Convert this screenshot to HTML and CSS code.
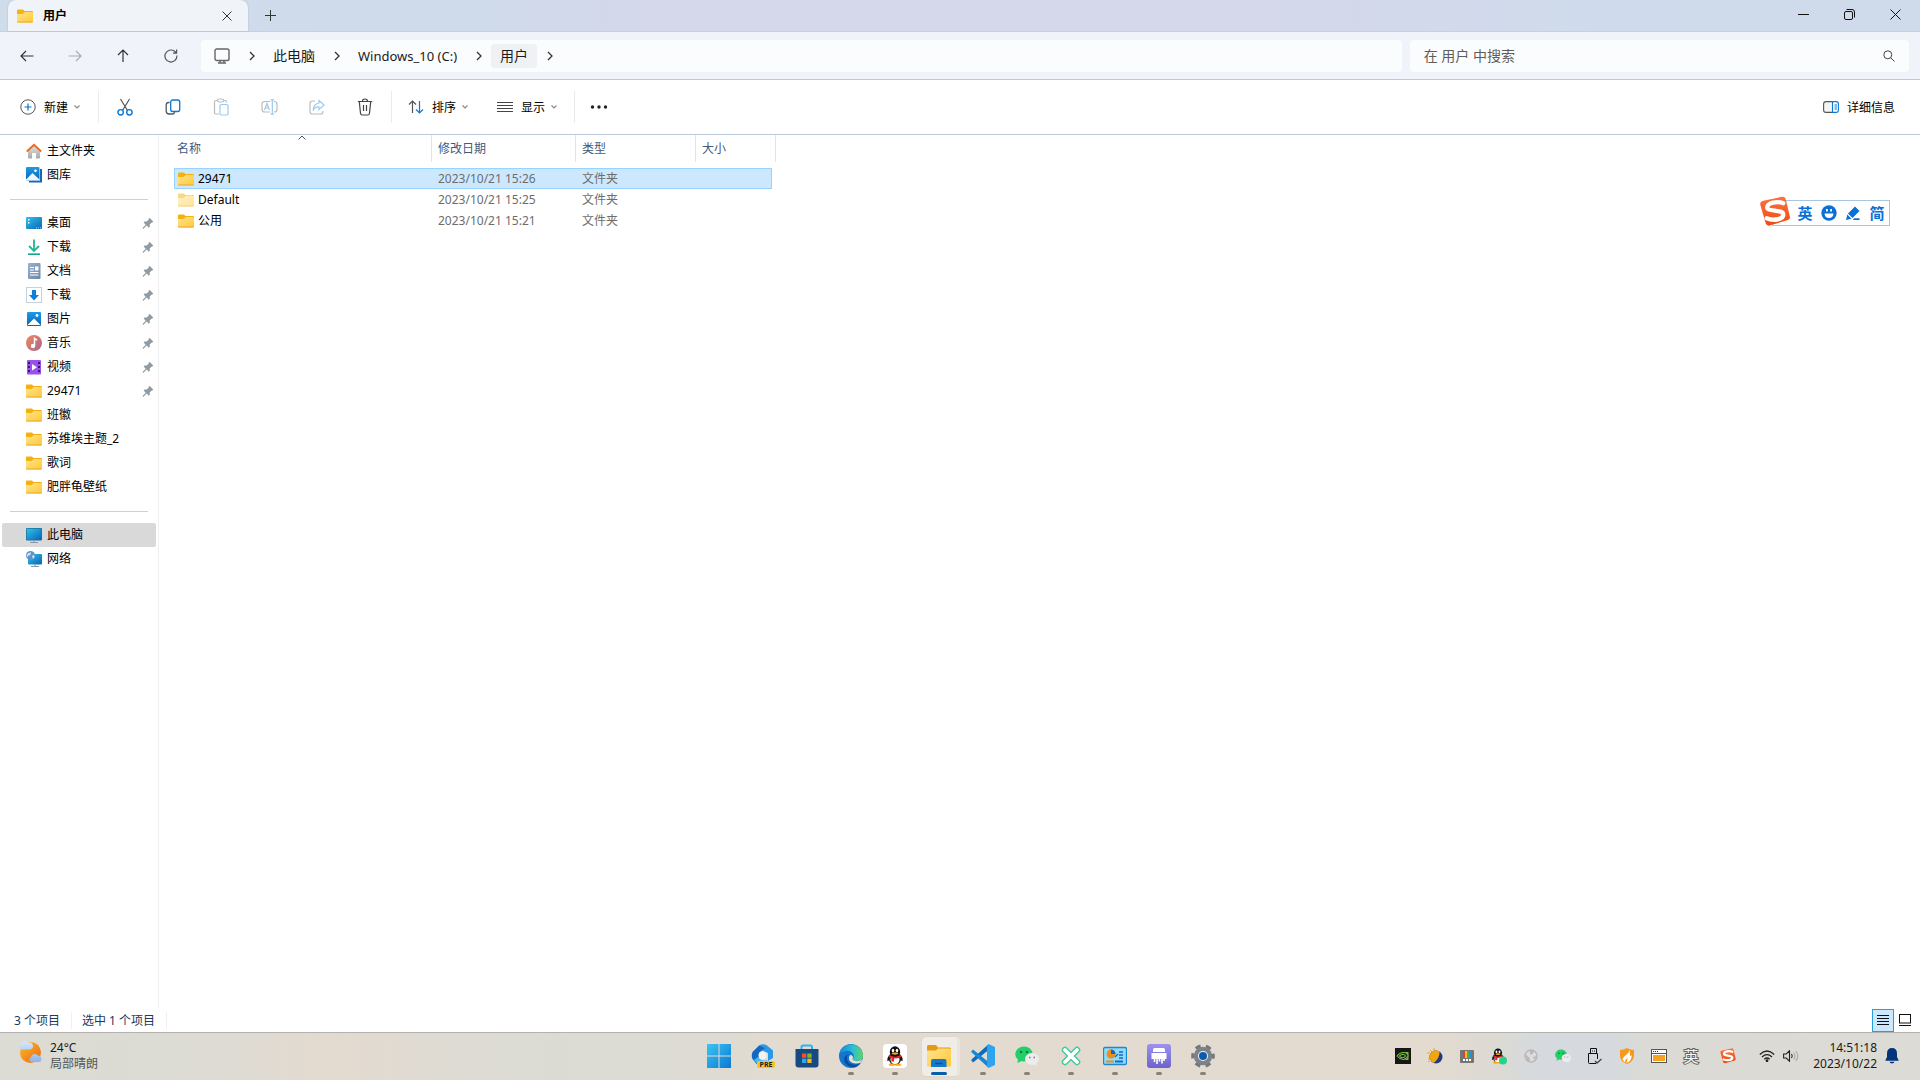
FILE: index.html
```html
<!DOCTYPE html>
<html lang="zh-CN">
<head>
<meta charset="utf-8">
<title>用户</title>
<meta name="viewport" content="width=device-width, initial-scale=1">
<link rel="stylesheet" href="styles.css">
</head>
<body>
<svg class="defs" aria-hidden="true">
  <defs>
    <linearGradient id="gFolder" x1="0" y1="0" x2="1" y2="1"><stop offset="0" stop-color="#ffe394"/><stop offset="1" stop-color="#ffc932"/></linearGradient>
    <linearGradient id="gSky" x1="0" y1="0" x2="1" y2="1"><stop offset="0" stop-color="#2fc3e8"/><stop offset="1" stop-color="#0a64b8"/></linearGradient>
    <linearGradient id="gBlue" x1="0" y1="0" x2="0" y2="1"><stop offset="0" stop-color="#1b9be8"/><stop offset="1" stop-color="#0b63b5"/></linearGradient>
    <linearGradient id="gDoc" x1="0" y1="0" x2="1" y2="1"><stop offset="0" stop-color="#9ab3cf"/><stop offset="1" stop-color="#6c86ac"/></linearGradient>
    <linearGradient id="gMusic" x1="0" y1="0" x2="1" y2="1"><stop offset="0" stop-color="#f08a5c"/><stop offset="1" stop-color="#a8648c"/></linearGradient>
    <linearGradient id="gHouse" x1="0" y1="0" x2="0" y2="1"><stop offset="0" stop-color="#e4e4e4"/><stop offset="1" stop-color="#a8a8a8"/></linearGradient>
    <linearGradient id="gSogou" x1="0" y1="0" x2="0" y2="1"><stop offset="0" stop-color="#fb7340"/><stop offset="1" stop-color="#f04a10"/></linearGradient>
    <linearGradient id="gSun" x1="0" y1="0" x2="1" y2="1"><stop offset="0" stop-color="#fbb82c"/><stop offset="1" stop-color="#ee6a10"/></linearGradient>
    <linearGradient id="gCloud" x1="0" y1="0" x2="0" y2="1"><stop offset="0" stop-color="#d8e8fb"/><stop offset="1" stop-color="#8fb4e6"/></linearGradient>
    <linearGradient id="gWin" x1="0" y1="0" x2="1" y2="1"><stop offset="0" stop-color="#3cc4f2"/><stop offset="1" stop-color="#0a78d2"/></linearGradient>
    <linearGradient id="gPurple" x1="0" y1="0" x2="0" y2="1"><stop offset="0" stop-color="#9c92ee"/><stop offset="1" stop-color="#6c62cc"/></linearGradient>
    <linearGradient id="gEdge" x1="0" y1="0" x2="1" y2="0"><stop offset="0" stop-color="#1688d8"/><stop offset=".6" stop-color="#2cc0d0"/><stop offset="1" stop-color="#62d858"/></linearGradient>
    <symbol id="folder" viewBox="0 0 16 14"><path d="M0 1.5Q0 .5 1 .5h5L7.500 2H15q1 0 1 1v5H0z" fill="#f5b20c"/><path d="M0 5h5.500L8 3h7q1 0 1 1v8.500q0 1-1 1H1q-1 0-1-1z" fill="url(#gFolder)"/><path d="M.3 13h15.400" stroke="#e9a92a"/></symbol>
    <symbol id="pin" viewBox="0 0 12 12"><path d="M7.400.800l3.900 3.700-1 1-.6-.1-2 2.200.1 2.100-1 1-2.100-2.200L1.400 11.700.6 11.500 .7 10.700 3.800 7.700 1.600 5.500l1-1 2.200.1 2-2-.1-.9z" fill="#8f9aa3"/></symbol>
    <symbol id="chev" viewBox="0 0 8 10"><path d="M2 1l4 4-4 4" fill="none" stroke="#333" stroke-width="1.300"/></symbol>
    <symbol id="down" viewBox="0 0 8 6"><path d="M1.500 1.500L4 4l2.500-2.500" fill="none" stroke="#8a8a8a" stroke-width="1.200"/></symbol>
    <symbol id="sogou" viewBox="0 0 32 32"><path d="M4 5L23 .800q3-.6 4 2l4.300 18q.7 3-2 4L10.500 30.500q-3 .6-4-2L.8 9Q.2 6 4 5z" fill="url(#gSogou)"/><path d="M24.500 7.500C18 5 8.500 7 8 11.500c-.5 5 16 2 16.500 7.500.5 5-10 7-17 4" fill="none" stroke="#fff" stroke-width="4.500" stroke-linecap="round"/></symbol>
    <symbol id="wechat" viewBox="0 0 24 20"><ellipse cx="9" cy="8" rx="8.800" ry="7.600" fill="#22cf68"/><path d="M3 13l-.5 4 4-2z" fill="#22cf68"/><circle cx="6" cy="6" r="1.200" fill="#0b7a3c"/><circle cx="12" cy="6" r="1.200" fill="#0b7a3c"/><ellipse cx="17" cy="13" rx="7" ry="6" fill="#ececee"/><path d="M20 17l2 2.800-4-1z" fill="#ececee"/><circle cx="14.800" cy="11.500" r=".9" fill="#888"/><circle cx="19.200" cy="11.500" r=".9" fill="#888"/></symbol>
    <symbol id="penguin" viewBox="0 0 20 22"><path d="M4 9Q1 13 1.500 16.500q1.500.5 2.500-1.500M16 9q3 4 2.500 7.500-1.500.5-2.500-1.500" fill="#111"/><ellipse cx="10" cy="14" rx="6.800" ry="7" fill="#111"/><ellipse cx="10" cy="15" rx="5" ry="5.500" fill="#fff"/><ellipse cx="10" cy="6.500" rx="5.800" ry="6.300" fill="#111"/><ellipse cx="7.800" cy="5" rx="1.400" ry="2" fill="#fff"/><ellipse cx="12.200" cy="5" rx="1.400" ry="2" fill="#fff"/><ellipse cx="10" cy="8.300" rx="3.600" ry="1.200" fill="#ffa800"/><path d="M3.500 9.500Q10 14 16.500 9.500l.6 2.200Q13 14 9 13.800V17H6v-3.700l-3-1.600z" fill="#e8202a"/><ellipse cx="6.500" cy="20.600" rx="3.500" ry="1.300" fill="#ffa800"/><ellipse cx="13.500" cy="20.600" rx="3.500" ry="1.300" fill="#ffa800"/></symbol>
    <symbol id="dl" viewBox="0 0 16 16"><path d="M8 .5v11M3 7l5 5 5-5" fill="none" stroke="#1fb794" stroke-width="1.800"/><path d="M2 15.200h12" stroke="#14a58c" stroke-width="1.600"/></symbol>
  </defs>
</svg>

<header class="titlebar">
  <div class="tab">
    <svg width="16" height="14"><use href="#folder"/></svg>
    <span class="tab-name">用户</span>
    <button class="plain tab-close" aria-label="关闭标签页"><svg width="10" height="10" viewBox="0 0 10 10"><path d="M.5.5l9 9M9.500.5l-9 9" stroke="#333"/></svg></button>
  </div>
  <button class="plain tab-new" aria-label="新标签页"><svg width="11" height="11" viewBox="0 0 11 11"><path d="M5.500 0v11M0 5.500h11" stroke="#333"/></svg></button>
  <div class="window-buttons">
    <button class="plain" aria-label="最小化"><svg width="11" height="11" viewBox="0 0 11 11"><path d="M0 5.500h11" stroke="#111"/></svg></button>
    <button class="plain" aria-label="还原"><svg width="11" height="11" viewBox="0 0 11 11" fill="none" stroke="#111"><rect x=".5" y="2.500" width="8" height="8" rx="1.500"/><path d="M2.500.5H8q2.500 0 2.500 2.500v5.500"/></svg></button>
    <button class="plain" aria-label="关闭"><svg width="11" height="11" viewBox="0 0 11 11"><path d="M.5.5l10 10M10.500.5l-10 10" stroke="#111"/></svg></button>
  </div>
</header>

<nav class="navbar">
  <div class="nav-buttons">
    <button class="plain" aria-label="后退"><svg width="14" height="12" viewBox="0 0 14 12" fill="none" stroke="#333" stroke-width="1.200"><path d="M13.500 6H1M6 1L1 6l5 5"/></svg></button>
    <button class="plain" aria-label="前进"><svg width="14" height="12" viewBox="0 0 14 12" fill="none" stroke="#a8abb0" stroke-width="1.200"><path d="M.5 6H13M8 1l5 5-5 5"/></svg></button>
    <button class="plain" aria-label="向上"><svg width="12" height="13" viewBox="0 0 12 13" fill="none" stroke="#333" stroke-width="1.200"><path d="M6 13V1M1 6l5-5 5 5"/></svg></button>
    <button class="plain" aria-label="刷新"><svg width="14" height="14" viewBox="0 0 14 14" fill="none" stroke="#555" stroke-width="1.200"><path d="M12.900 6.500A6 6 0 1 1 10.500 2.200L12.500 4M12.600.5V4.200H9"/></svg></button>
  </div>
  <div class="address">
    <button class="crumb" aria-label="位置"><svg width="16" height="16" viewBox="0 0 16 16" fill="none" stroke="#666" stroke-width="1.400"><rect x="1" y="1" width="14" height="11.500" rx="1.800"/><path d="M6 12.500v2M10 12.500v2M4 15h8"/></svg></button>
    <svg class="chev" width="8" height="10"><use href="#chev"/></svg>
    <button class="crumb">此电脑</button>
    <svg class="chev" width="8" height="10"><use href="#chev"/></svg>
    <button class="crumb latin">Windows_10 (C:)</button>
    <svg class="chev" width="8" height="10"><use href="#chev"/></svg>
    <button class="crumb current">用户</button>
    <svg class="chev" width="8" height="10"><use href="#chev"/></svg>
  </div>
  <label class="search">
    <input type="text" placeholder="在 用户 中搜索" aria-label="在 用户 中搜索">
    <svg width="12" height="12" viewBox="0 0 12 12" fill="none" stroke="#444"><circle cx="4.800" cy="4.800" r="4"/><path d="M7.700 7.700l3.800 3.800"/></svg>
  </label>
</nav>

<div class="toolbar">
  <div class="tool-group new">
    <button class="tool"><svg width="16" height="16" viewBox="0 0 16 16" fill="none"><circle cx="8" cy="8" r="7.200" stroke="#555"/><path d="M8 4.500v7M4.500 8h7" stroke="#0a6fd0" stroke-width="1.200"/></svg><span>新建</span><svg width="8" height="6"><use href="#down"/></svg></button>
  </div>
  <div class="tool-group icons">
    <button class="tool" aria-label="剪切"><svg width="16" height="18" viewBox="0 0 16 18" fill="none"><path d="M3.500 1l7 11.500M12.500 1l-7 11.500" stroke="#555" stroke-width="1.200"/><circle cx="3.600" cy="14.300" r="2.700" stroke="#0a78d4" stroke-width="1.400"/><circle cx="12.400" cy="14.300" r="2.700" stroke="#0a78d4" stroke-width="1.400"/></svg></button>
    <button class="tool" aria-label="复制"><svg width="16" height="16" viewBox="0 0 16 16" fill="none" stroke-width="1.300"><path d="M4.500 3.500H3.500Q1.200 3.500 1.200 6v6q0 3 3 3h3q2 0 2.500-1.700" stroke="#555"/><rect x="5.700" y="1" width="9" height="11.500" rx="2" stroke="#0a78d4"/></svg></button>
    <button class="tool" aria-label="粘贴"><svg width="16" height="18" viewBox="0 0 16 18" fill="none" stroke-width="1.200"><path d="M4.500 2.500H3q-1.500 0-1.500 1.500v10.500q0 1.500 1.500 1.500h3M10.500 2.500H12q1.500 0 1.500 1.500v.5" stroke="#bbb"/><rect x="4.500" y="1" width="6" height="3" rx="1.500" stroke="#bbb"/><rect x="7" y="6.500" width="8" height="10.500" rx="1.500" stroke="#9cc8ee"/></svg></button>
    <button class="tool" aria-label="重命名"><svg width="17" height="16" viewBox="0 0 17 16" fill="none" stroke-width="1.200"><path d="M9 2.500H3.500q-2.500 0-2.500 2.500v5.500Q1 13 3.500 13H9M13 2.500q3 0 3 2.500v5.500q0 2.500-3 2.500" stroke="#bbb"/><path d="M3.500 11L6 4.500 8.500 11M4.300 9h3.400M11.300 1v14M9.500.8h3.600M9.500 15.200h3.600" stroke="#9cc8ee"/></svg></button>
    <button class="tool" aria-label="共享"><svg width="16" height="16" viewBox="0 0 16 16" fill="none" stroke-width="1.200"><path d="M6 2H3.500Q1 2 1 4.500v8Q1 15 3.500 15h8q2.500 0 2.500-2.500V12" stroke="#bbb"/><path d="M10 1.500L15 6l-5 4.500V8Q6 7.500 4 11.500 4.500 5 10 4z" stroke="#9cc8ee"/></svg></button>
    <button class="tool" aria-label="删除"><svg width="16" height="18" viewBox="0 0 16 18" fill="none" stroke="#444" stroke-width="1.200"><path d="M.8 3.500h14.400M5.500 3.200Q5.500 1 8 1t2.500 2.200M2.300 3.800l1.200 11.500q.2 1.700 1.700 1.700h5.600q1.500 0 1.700-1.700l1.200-11.500M6.500 7v6M9.500 7v6"/></svg></button>
  </div>
  <div class="tool-group views">
    <button class="tool"><svg width="16" height="14" viewBox="0 0 16 14" fill="none" stroke-width="1.200"><path d="M4.500 13V1M1 4.500L4.500 1 8 4.500" stroke="#555"/><path d="M11.500 1v12M8 9.500l3.500 3.500L15 9.500" stroke="#0a78d4"/></svg><span>排序</span><svg width="8" height="6"><use href="#down"/></svg></button>
    <button class="tool"><svg width="16" height="12" viewBox="0 0 16 12" stroke="#444"><path d="M0 1.500h16M0 4.500h16M0 7.500h16M0 10.500h16"/></svg><span>显示</span><svg width="8" height="6"><use href="#down"/></svg></button>
  </div>
  <div class="tool-group more">
    <button class="tool" aria-label="查看更多"><svg width="18" height="4" viewBox="0 0 18 4" fill="#222"><circle cx="2.500" cy="2" r="1.700"/><circle cx="9" cy="2" r="1.700"/><circle cx="15.500" cy="2" r="1.700"/></svg></button>
  </div>
  <button class="tool details"><svg width="16" height="12" viewBox="0 0 16 12" fill="none"><path d="M9.500.6H3Q.6.600.6 3v6Q.6 11.400 3 11.400h6.500" stroke="#555" stroke-width="1.100" fill="#f4f4f4"/><path d="M9.500.6H13q2.400 0 2.400 2.400v6q0 2.400-2.400 2.400H9.500zM11.500 4H14M11.500 6H14M11.500 8H14" stroke="#0a78d4" stroke-width="1.100"/></svg><span>详细信息</span></button>
</div>

<div class="main">
  <aside class="sidebar">
    <ul>
      <li><a href="#"><svg width="16" height="16" viewBox="0 0 16 16"><path d="M2 7l6-5.500L14 7v7.500q0 1-1 1H10V10H6v5.500H3q-1 0-1-1z" fill="url(#gHouse)"/><path d="M.8 8.500L8 1.700l7.200 6.800" fill="none" stroke="#ec6a1e" stroke-width="1.900"/></svg><span>主文件夹</span></a></li>
      <li><a href="#"><svg width="16" height="16" viewBox="0 0 16 16"><path d="M3 14.500h12V2" fill="none" stroke="#1668b8" stroke-width="2"/><rect width="13.500" height="13.500" rx="1" fill="url(#gBlue)"/><path d="M0 12.500L6.500 6l7 6.500v1H0z" fill="#eef6ff"/><circle cx="9.500" cy="3.700" r="1.300" fill="#fff"/></svg><span>图库</span></a></li>
    </ul>
    <hr>
    <ul>
      <li><a href="#"><svg width="16" height="16" viewBox="0 0 16 16"><rect y="2" width="16" height="12" rx="1" fill="url(#gSky)"/><path d="M2 4h1.500v1.500H2zM2 7h1.500v1.500H2z" fill="#fff"/><path d="M10 12.800h5" stroke="#8cd4f4" stroke-dasharray="1 1"/></svg><span>桌面</span></a><svg width="12" height="12"><use href="#pin"/></svg></li>
      <li><a href="#"><svg width="16" height="16"><use href="#dl"/></svg><span>下载</span></a><svg width="12" height="12"><use href="#pin"/></svg></li>
      <li><a href="#"><svg width="16" height="16" viewBox="0 0 16 16"><rect x="2" width="12.500" height="16" rx="1" fill="url(#gDoc)"/><path d="M4 4.500h4M4 7h4M4 9.500h8.500M4 12h8.500" stroke="#fff"/><rect x="9" y="3.500" width="3.500" height="4" fill="#fff"/></svg><span>文档</span></a><svg width="12" height="12"><use href="#pin"/></svg></li>
      <li><a href="#"><svg width="16" height="16" viewBox="0 0 16 16"><rect x=".5" y=".5" width="15" height="15" fill="#fff" stroke="#c8d0d8"/><path d="M6 3h4v5h3l-5 5.500L3 8h3z" fill="#0f80d8"/></svg><span>下载</span></a><svg width="12" height="12"><use href="#pin"/></svg></li>
      <li><a href="#"><svg width="16" height="16" viewBox="0 0 16 16"><rect x="1" y="1" width="14" height="14" rx="1" fill="url(#gBlue)"/><path d="M1.500 14L8 7.500l6.500 6.500z" fill="#fff"/><circle cx="11" cy="4.500" r="1.400" fill="#fff"/></svg><span>图片</span></a><svg width="12" height="12"><use href="#pin"/></svg></li>
      <li><a href="#"><svg width="16" height="16" viewBox="0 0 16 16"><circle cx="8" cy="8" r="8" fill="url(#gMusic)"/><path d="M8.500 11V3.500l2.500 1.700" fill="none" stroke="#fff" stroke-width="1.500"/><circle cx="7" cy="11" r="2.200" fill="#fff"/></svg><span>音乐</span></a><svg width="12" height="12"><use href="#pin"/></svg></li>
      <li><a href="#"><svg width="16" height="16" viewBox="0 0 16 16"><rect x="1" y="1" width="14" height="14.500" rx="1" fill="#9a50ea"/><path d="M3 3v11M13 3v11" stroke="#3c1478" stroke-width="2" stroke-dasharray="2 2"/><path d="M6 5l5 3.300L6 11.500z" fill="#fff"/></svg><span>视频</span></a><svg width="12" height="12"><use href="#pin"/></svg></li>
      <li><a href="#"><svg width="16" height="14"><use href="#folder"/></svg><span>29471</span></a><svg width="12" height="12"><use href="#pin"/></svg></li>
      <li><a href="#"><svg width="16" height="14"><use href="#folder"/></svg><span>班徽</span></a></li>
      <li><a href="#"><svg width="16" height="14"><use href="#folder"/></svg><span>苏维埃主题_2</span></a></li>
      <li><a href="#"><svg width="16" height="14"><use href="#folder"/></svg><span>歌词</span></a></li>
      <li><a href="#"><svg width="16" height="14"><use href="#folder"/></svg><span>肥胖龟壁纸</span></a></li>
    </ul>
    <hr>
    <ul>
      <li class="active"><a href="#"><svg width="16" height="16" viewBox="0 0 16 16"><rect y="1" width="16" height="12.500" rx="1" fill="#1a6f9c"/><rect x=".7" y="1.700" width="14.600" height="11" fill="url(#gSky)"/><path d="M8 13v2.500M4 15.500h8" stroke="#8a9aa8" stroke-width="1.200"/></svg><span>此电脑</span></a></li>
      <li><a href="#"><svg width="16" height="16" viewBox="0 0 16 16"><rect x="2" y="3" width="14" height="10.500" rx="1" fill="url(#gSky)"/><path d="M9 13v2.500M5 15.500h8" stroke="#8a9aa8" stroke-width="1.200"/><circle cx="4.500" cy="4.500" r="4.500" fill="#5a94cc"/><path d="M1 3.500Q3 1 5 1.500 5 4 3 4.500T2 7Q0 5 1 3.500zM6 5l2-1 .5 2L7 8z" fill="#d4e4f2"/></svg><span>网络</span></a></li>
    </ul>
  </aside>

  <main class="files">
    <table>
      <colgroup><col class="c-name"><col class="c-date"><col class="c-type"><col class="c-size"></colgroup>
      <thead>
        <tr>
          <th>名称<svg class="sorted" width="8" height="5" viewBox="0 0 8 5"><path d="M.5 4.500L4 1l3.500 3.500" fill="none" stroke="#555"/></svg></th>
          <th>修改日期</th><th>类型</th><th>大小</th>
        </tr>
      </thead>
      <tbody>
        <tr class="selected"><td><div class="cell name"><svg width="16" height="14"><use href="#folder"/></svg>29471</div></td><td><div class="cell">2023/10/21 15:26</div></td><td><div class="cell">文件夹</div></td><td><div class="cell"></div></td></tr>
        <tr class="hidden-item"><td><div class="cell name"><svg width="16" height="14"><use href="#folder"/></svg>Default</div></td><td><div class="cell">2023/10/21 15:25</div></td><td><div class="cell">文件夹</div></td><td><div class="cell"></div></td></tr>
        <tr><td><div class="cell name"><svg width="16" height="14"><use href="#folder"/></svg>公用</div></td><td><div class="cell">2023/10/21 15:21</div></td><td><div class="cell">文件夹</div></td><td><div class="cell"></div></td></tr>
      </tbody>
    </table>
  </main>
</div>

<footer class="status">
  <span>3 个项目</span>
  <span>选中 1 个项目</span>
  <div class="view-switch">
    <button class="plain on" aria-label="详细信息视图"><svg width="12" height="11" viewBox="0 0 12 11" stroke="#111"><path d="M0 .5h12M0 3.500h12M0 6.500h12M0 9.500h12" /></svg></button>
    <button class="plain" aria-label="大缩略图视图"><svg width="12" height="12" viewBox="0 0 12 12" fill="none" stroke="#111"><rect x=".5" y=".5" width="11" height="8.500"/><path d="M0 11.500h12"/></svg></button>
  </div>
</footer>

<div class="taskbar">
  <button class="plain weather">
    <svg width="24" height="24" viewBox="0 0 24 24"><circle cx="12.500" cy="12.500" r="10.500" fill="url(#gSun)"/><path d="M3 9.500a3 3 0 0 1 0-5.500 4 4 0 0 1 7-1.500A3.500 3.500 0 0 1 12.500 9.500zM13 22a2.800 2.800 0 0 1 0-5 4 4 0 0 1 7-1.500A3.400 3.400 0 0 1 21.500 22z" fill="url(#gCloud)"/></svg>
    <span class="two-line"><span>24°C</span><span class="muted">局部晴朗</span></span>
  </button>

  <div class="apps">
    <button class="app" aria-label="开始"><svg width="24" height="24" viewBox="0 0 24 24" fill="url(#gWin)"><path d="M0 0h11.500v11.500H0zM12.500 0H24v11.500H12.500zM0 12.500h11.500V24H0zM12.500 12.500H24V24H12.500z"/></svg></button>
    <button class="app" aria-label="电脑管家"><svg width="24" height="24" viewBox="0 0 24 24"><path d="M8 1.500Q12-1 16 1.500l6 5V14l-5 3V9l-7-3z" fill="#2a9ae8"/><path d="M8 1.500L1.500 8Q0 12 1.500 15l5 6L8 15V9l6-5z" fill="#1568c0"/><path d="M3 16l4-3q4 5 9 3l2 4q-8 5-15-4z" fill="#48b8f4"/><circle cx="11.500" cy="11.500" r="4" fill="#f2f2f0"/><rect x="6" y="17" width="18" height="7" rx="2" fill="#fbc418"/><text x="15" y="23" text-anchor="middle" class="badge">PRE</text></svg></button>
    <button class="app" aria-label="商店"><svg width="24" height="24" viewBox="0 0 24 24"><path d="M6.500 6V3Q6.500 1.500 8 1.500h7.500Q17 1.500 17 3v3" fill="none" stroke="#30b4f0" stroke-width="2"/><path d="M.5 5h23v15.500q0 3-3 3h-17q-3 0-3-3z" fill="#174a82"/><path d="M7 9.500h4.300v4.300H7z" fill="#f2512a"/><path d="M12.300 9.500h4.300v4.300h-4.300z" fill="#7fba1c"/><path d="M7 14.700h4.300V19H7z" fill="#2ca8ee"/><path d="M12.300 14.700h4.300V19h-4.300z" fill="#fdb913"/></svg></button>
    <button class="app running" aria-label="Edge"><svg width="24" height="24" viewBox="0 0 24 24"><circle cx="12" cy="12" r="12" fill="#1276cc"/><path d="M.3 10A12 12 0 0 1 24 11q0 6-6 6-4 0-4.500-2 2-2 1-4.500Q12 6 7 7 2 8 .3 10z" fill="url(#gEdge)"/><path d="M9.500 10Q6 14 9.500 18.500 13 22 21 19.800q-1.500 2-4 3.300Q10 24 6 19 3 13 9.500 10z" fill="#0b4c9e"/><path d="M13.500 15q.5 2 4.500 2.200 3 0 5.500-2l-1.500 3.300Q14 21 10.500 16.500 9 13 11.500 10.800q3.500 1 2 4.200z" fill="#e8e0d8"/></svg></button>
    <button class="app running" aria-label="QQ"><svg width="24" height="24" viewBox="0 0 24 24"><rect width="24" height="24" rx="4" fill="#fff"/><use href="#penguin" x="3" y="1.500" width="18" height="21"/></svg></button>
    <button class="app running focused" aria-label="文件资源管理器"><svg width="24" height="22" viewBox="0 0 24 22"><path d="M0 1.500Q0 0 1.500 0H9l2 2.500h11.500Q24 2.500 24 4v8H0z" fill="#e59a12"/><path d="M0 5.500h9l2-2h11.500Q24 3.500 24 5v15.500q0 1-1 1H1q-1 0-1-1z" fill="url(#gFolder)"/><path d="M4 22v-6q0-2 2-2h11.500q2 0 2 2v6z" fill="#1878cc"/><path d="M8 18.500h7.500" stroke="#0c5298" stroke-width="1.500"/></svg></button>
    <button class="app running" aria-label="VS Code"><svg width="24" height="24" viewBox="0 0 24 24"><path d="M17.500 6L2 18.500.5 16.500v-1L17.500.2z" fill="#0f6cb8"/><path d="M17.500 18L2 5.500.5 7.300v1L17.500 23.800z" fill="#1488d8"/><path d="M17.500 0L24 3v18l-6.500 3-1.500-1.500V1.500z" fill="#2ca4ee"/></svg></button>
    <button class="app running" aria-label="微信"><svg width="24" height="20"><use href="#wechat"/></svg></button>
    <button class="app running" aria-label="X"><svg width="20" height="20" viewBox="0 0 20 20" fill="none" stroke-linecap="round"><path d="M4 4l12 12M16 4L4 16" stroke="#3ccb9c" stroke-width="6.500"/><path d="M4 4l12 12M16 4L4 16" stroke="#fff" stroke-width="3.800"/></svg></button>
    <button class="app running" aria-label="控制面板"><svg width="24" height="20" viewBox="0 0 24 20"><rect x=".5" y="1.500" width="23" height="17" rx="1.500" fill="#8edcfa" stroke="#1c88d0" stroke-width="1.300"/><circle cx="8" cy="8" r="4.500" fill="#f08c18"/><path d="M8 8V3.500A4.500 4.500 0 0 1 12.500 8z" fill="#1668c0"/><path d="M12 11l3-3M16 6h4M16 9h4M16 12h4" stroke="#1668c0" stroke-width="1.300"/><path d="M3 15.500h8" stroke="#f08c18" stroke-width="2"/><path d="M12 15.500h8" stroke="#1668c0" stroke-width="2"/></svg></button>
    <button class="app running" aria-label="粉碎"><svg width="24" height="24" viewBox="0 0 24 24"><rect width="24" height="24" rx="3" fill="url(#gPurple)"/><path d="M7.500 4h9q1.500 0 1.500 2v2H6V6q0-2 1.500-2zM4.500 9h15v6h-15z" fill="#fff"/><path d="M7.500 14v4M10 14v6M12.500 14v3.500M15 14v5.500M17 14v3" stroke="#fff" stroke-width="1.600"/></svg></button>
    <button class="app running" aria-label="设置"><svg width="24" height="24" viewBox="0 0 24 24"><circle cx="12" cy="12" r="9.800" fill="none" stroke="#72787e" stroke-width="4" stroke-dasharray="5.130 5.130" stroke-dashoffset="2.600"/><circle cx="12" cy="12" r="7" fill="none" stroke="#7c8288" stroke-width="4.500"/><circle cx="12" cy="12" r="5" fill="#e8eef4"/><circle cx="12" cy="12" r="4" fill="#0b5cab"/></svg></button>
  </div>

  <div class="tray">
    <button class="plain" aria-label="NVIDIA"><svg width="16" height="16" viewBox="0 0 16 16"><rect width="16" height="16" fill="#161616"/><path d="M2 8q3-4 7-3.500T13 8q-2 3.500-5 3.500T2 8zM4.500 8Q6.500 6 8.500 6.500T10.500 8 8 9.500 4.500 8z" fill="none" stroke="#76b83a" stroke-width="1.100"/><path d="M8 4h5.500v8H9q4-1.500 4-4T8 4z" fill="#76b83a"/></svg></button>
    <button class="plain" aria-label="日夜"><svg width="16" height="16" viewBox="0 0 16 16"><path d="M0 5h3M1 11h3M3 2l2 2M7 0v3M1 14l2-1" stroke="#eea820"/><circle cx="9" cy="9" r="6.500" fill="#26387c"/><path d="M12.500 3.500Q13 10 6.500 15A6.500 6.500 0 0 1 4 5Q8 1 12.500 3.500z" fill="#f0a60c"/></svg></button>
    <button class="plain" aria-label="内存"><svg width="14" height="14" viewBox="0 0 14 14"><rect x=".7" y="1.700" width="12.600" height="11.600" fill="#777" stroke="#666"/><path d="M3 2h2v7H3z" fill="#e83c2c"/><path d="M5 2h2v7H5z" fill="#f4c020"/><path d="M7 2h2v7H7z" fill="#40b850"/><path d="M9 2h2v7H9z" fill="#2c8ce8"/><path d="M3 11h8" stroke="#fff" stroke-width="2" stroke-dasharray="2 1"/></svg></button>
    <button class="plain" aria-label="QQ"><svg width="16" height="17" viewBox="0 0 16 17"><use href="#penguin" width="14" height="16"/><circle cx="12" cy="12.500" r="4" fill="#24d488"/></svg></button>
    <button class="plain" aria-label="地球"><svg width="14" height="14" viewBox="0 0 14 14"><circle cx="7" cy="7" r="6" fill="#dcdcdc" stroke="#b8b8b8" stroke-width="1.400"/><path d="M1.500 5l4 4 .5 3.500-3-1.500zM6 1.500h4.500L8.500 5 6 5.500zM9 8l3.500-1-2 4z" fill="#b8b8b8"/></svg></button>
    <button class="plain" aria-label="微信"><svg width="16" height="14"><use href="#wechat"/></svg></button>
    <button class="plain" aria-label="安全删除硬件"><svg width="14" height="16" viewBox="0 0 14 16" fill="none" stroke="#111"><path d="M2.500 5V.5h6V5"/><path d="M4 3h1M6 3h1"/><path d="M8 15.500H1.500q-1 0-1-1V5.500h9V11"/><path d="M7 13l2 2 4.500-4" stroke="#444" stroke-width="1.300"/></svg></button>
    <button class="plain" aria-label="火绒"><svg width="14" height="16" viewBox="0 0 14 16"><path d="M7 0q3 2 7 2v6q0 5-7 8-7-3-7-8V2q4 0 7-2z" fill="#f79a1c"/><path d="M9.500 2q-.5 3-3.500 5T2.500 11.500L5 14.500q0-3 2.500-5 0 3-1 5.500Q12.500 12 11.500 7L10 8.500z" fill="#fff"/></svg></button>
    <button class="plain" aria-label="窗口"><svg width="16" height="14" viewBox="0 0 16 14"><rect x=".5" y=".5" width="15" height="13" fill="#fff" stroke="#555"/><path d="M.5 4.500h15" stroke="#555"/><path d="M2 2.500h6" stroke="#333" stroke-dasharray="1 1"/><path d="M2 6h12v6H2z" fill="#f9a31c"/></svg></button>
    <button class="plain ime" aria-label="输入法">英</button>
    <button class="plain" aria-label="搜狗输入法"><svg width="16" height="16"><use href="#sogou"/></svg></button>
    <button class="plain net" aria-label="网络和音量"><svg width="16" height="12" viewBox="0 0 16 12" fill="none" stroke="#222" stroke-width="1.200"><path d="M.8 4.500Q8-2.500 15.200 4.500M3 7q5-4.600 10 0M5.300 9.200q2.700-2.400 5.400 0"/><circle cx="8" cy="10.700" r=".8" fill="#222"/></svg><svg width="16" height="12" viewBox="0 0 16 12" fill="none" stroke="#222" stroke-width="1.100"><path d="M.6 4h2.600L6.500.8v10.400L3.200 8H.6z"/><path d="M8.500 4q1.500 2 0 4"/><path d="M10.500 2.500q3 3.500 0 7M12.800 1q4 5 0 10" stroke="#aaa"/></svg></button>
    <button class="plain clock"><span>14:51:18</span><span>2023/10/22</span></button>
    <button class="plain bell" aria-label="通知"><svg width="14" height="16" viewBox="0 0 14 16" fill="#04357c"><path d="M7 0q5 0 5 5.500V9l1.500 3v.8H.5V12L2 9V5.500Q2 0 7 0zM4.500 13.800h5Q9 15.500 7 15.500t-2.500-1.700z"/></svg></button>
  </div>
</div>

<div class="ime-float">
  <svg class="ime-logo" width="32" height="31"><use href="#sogou"/></svg>
  <button class="plain">英</button>
  <button class="plain" aria-label="表情"><svg width="16" height="16" viewBox="0 0 16 16"><circle cx="8" cy="8" r="7.700" fill="#0a70d8"/><path d="M5 4h1.800v2.500H5zM9.200 4H11v2.500H9.200zM3.500 8.500h9Q12 13 8 13T3.500 8.500z" fill="#fff"/></svg></button>
  <button class="plain" aria-label="手写"><svg width="14" height="14" viewBox="0 0 14 14" fill="#0a70d8"><path d="M9 .500L13.500 5 6.500 12 2 7.500zM1.300 8.500l4.200 4.200L0 14zM8 12.300h5.500V14H7z"/></svg></button>
  <button class="plain">简</button>
</div>
</body>
</html>
```
FILE: styles.css
```css
* { box-sizing: border-box; }

body {
  margin: 0;
  min-height: 100vh;
  display: flex;
  flex-direction: column;
  background: #fff;
  color: #000;
  font: 12px/16px "Noto Sans", "Noto Sans CJK SC", sans-serif;
}

button, input { font: inherit; color: inherit; }
svg { display: block; flex: none; }
a { color: inherit; text-decoration: none; }
.defs { position: absolute; width: 0; height: 0; }

.plain, .tool, .crumb, .app {
  display: flex;
  align-items: center;
  justify-content: center;
  padding: 0;
  border: 0;
  background: none;
  white-space: nowrap;
}

/* Title bar */
.titlebar {
  display: flex;
  align-items: stretch;
  height: 32px;
  padding-left: 8px;
  border-bottom: 1px solid #c3d0e2;
  background: linear-gradient(90deg, #cfdcea 0, #cfdbea 24%, #d4d8ea 34%, #d4d8ea 66%, #cfdbec 84%, #cfdbeb 100%);
}
.tab {
  display: flex;
  align-items: center;
  width: 240px;
  padding: 0 16px 0 9px;
  gap: 10px;
  border-radius: 8px 8px 0 0;
  background: #f0f4f9;
  box-shadow: 0 0 2px #a9b8cc;
}
.tab-name { flex: 1; padding-top: 1px; font-weight: 600; }
.tab-new { width: 44px; }
.window-buttons { display: flex; margin-left: auto; padding: 0 2px 3px 0; }
.window-buttons .plain { width: 46px; }

/* Navigation */
.navbar {
  display: flex;
  align-items: center;
  height: 48px;
  padding-right: 11px;
  border-bottom: 1px solid #bcc9dc;
  background: #f0f3f9;
}
.nav-buttons { display: flex; padding-left: 3px; width: 201px; }
.nav-buttons .plain { width: 48px; height: 32px; }
.address, .search {
  display: flex;
  align-items: center;
  height: 32px;
  border-radius: 4px;
  background: #fbfcfe;
}
.address { flex: 1; padding-left: 4px; color: #1a1a1a; font-size: 14px; line-height: 20px; }
.crumb { height: 24px; padding: 0 9px; border-radius: 4px; }
.crumb.latin { font-size: 13px; }
.crumb.current { background: #f0f1f4; }
.address .chev { margin: 0 8px 0 9px; }
.search { flex: 0 0 26%; min-width: 0; margin-left: 8px; padding: 0 14px; }
.navbar { --edge: 11px; }
.navbar .search { flex-basis: calc(26% + 3px); }
.search input {
  flex: 1;
  min-width: 0;
  padding: 0;
  border: 0;
  outline: 0;
  background: none;
  font-size: 14px;
  line-height: 20px;
}
.search input::placeholder { color: #5c5c5c; opacity: 1; }

/* Command bar */
.toolbar {
  display: flex;
  align-items: center;
  height: 55px;
  border-bottom: 1px solid #bcc9dc;
  background: #fff;
}
.tool { height: 32px; gap: 8px; }
.tool span { padding-top: 1px; }
.tool-group { display: flex; align-items: center; height: 32px; }
.tool-group.new, .tool-group.icons, .tool-group.views { border-right: 1px solid #ebebeb; }
.tool-group.new { width: 99px; padding-left: 20px; }
.tool-group.icons { padding: 0 2px; }
.tool-group.icons .tool { width: 48px; }
.tool-group.new .tool, .tool-group.views .tool { gap: 5px; }
.tool-group.new .tool span, .tool-group.views .tool span { margin-left: 3px; }
.tool-group.views { padding: 0 16px; gap: 28px; }
.tool-group.more { padding-left: 15px; }
.details { margin-left: auto; margin-right: 25px; }

/* Body */
.main { flex: 1; display: flex; }
.sidebar { width: 159px; padding: 4px 2px; border-right: 1px solid #f0f0f0; }
.sidebar ul { margin: 0; padding: 0; list-style: none; }
.sidebar li {
  display: flex;
  align-items: center;
  justify-content: space-between;
  height: 24px;
  padding: 0 2px 0 24px;
  border-radius: 2px;
}
.sidebar li.active { background: #d9d9d9; }
.sidebar a { display: flex; align-items: center; gap: 5px; }
.sidebar hr { height: 1px; margin: 12px 8px 11px 8px; border: 0; background: #d0d0d0; }

.files { flex: 1; padding-left: 15px; }
table { table-layout: fixed; width: 602px; border-collapse: separate; border-spacing: 0; }
.c-name { width: 258px; }
.c-date { width: 144px; }
.c-type { width: 120px; }
.c-size { width: 80px; }
th {
  position: relative;
  height: 27px;
  padding: 0 0 0 6px;
  border-right: 1px solid #e4e4e4;
  color: #44597a;
  font-weight: 400;
  text-align: left;
}
th:first-child { padding-left: 3px; }
.sorted { position: absolute; top: 0; left: 50%; margin-left: -5px; }
tbody::before { content: ""; display: block; height: 6px; }
td { padding: 0; color: #6d6d6d; }
td:last-child { padding-right: 4px; }
.cell { display: flex; align-items: center; height: 21px; padding-left: 6px; }
.cell.name { gap: 4px; padding-left: 4px; color: #000; }
.selected .cell { border: solid #99d1ff; border-width: 1px 0; background: #cce8ff; }
.selected .cell.name { padding-left: 3px; border-left-width: 1px; }
.selected td:last-child .cell { border-right-width: 1px; }
.hidden-item svg { opacity: .5; }

/* Status bar */
.status {
  display: flex;
  align-items: center;
  height: 24px;
  padding: 0 4px 0 14px;
  color: #1e395b;
}
.status > span { padding: 1px 11px 0 0; margin-right: 10px; border-right: 1px solid #f0f0f0; }
.view-switch { display: flex; margin-left: auto; }
.view-switch .plain { width: 22px; height: 23px; }
.view-switch .on { border: 1px solid #26a0da; background: #cce8ff; }

/* Taskbar */
.taskbar {
  display: grid;
  grid-template-columns: 1fr auto 1fr;
  align-items: center;
  height: 48px;
  padding: 0 0 2px 2px;
  border-top: 1px solid #b2b1ad;
  background: linear-gradient(90deg, #dcdbd4 0, #dddbd3 12%, #e4dacf 17%, #dddbd3 24%, #dcdbd4 34%, #e3dbd0 42%, #e4dbd0 74%, #dcdad4 78%, #d6dade 80%, #d6dade 84%, #dcdad4 86%, #dddbd5 100%);
}
.weather { justify-self: start; align-items: flex-start; gap: 8px; padding-left: 16px; text-align: left; color: #1a1a1a; }
.two-line { display: flex; flex-direction: column; }
.muted { color: #555; }
.apps { display: flex; gap: 4px; }
.app { position: relative; z-index: 0; width: 40px; height: 46px; }
.badge { font: 700 7px/1 "Noto Sans", sans-serif; fill: #222; }
.running::after {
  content: "";
  position: absolute;
  bottom: 4px;
  left: 50%;
  width: 6px;
  height: 3px;
  margin-left: -3px;
  border-radius: 2px;
  background: #85827e;
}
.focused::before {
  content: "";
  position: absolute;
  z-index: -1;
  inset: 4px 2px 3px 3px;
  border-radius: 4px;
  background: #f0ece7;
  box-shadow: 3px 0 0 #e9e4de, 0 0 1px #b8b4ae;
}
.focused::after { width: 16px; margin-left: -8px; background: #0b5cab; }

.tray { display: flex; align-items: center; justify-self: end; padding-right: 20px; }
.tray > .plain { width: 32px; height: 40px; }
.tray > .ime { color: #f4f4f2; font-size: 15px; font-weight: 400; -webkit-text-stroke: 2px #666; paint-order: stroke fill; }
.tray > .ime + .plain { width: 42px; }
.tray > .net { width: 60px; gap: 8px; }
.tray > .clock { flex-direction: column; align-items: flex-end; width: 68px; color: #1a1a1a; }
.tray > .bell { width: 16px; margin-left: 7px; }

/* Floating input-method bar */
.ime-float {
  position: absolute;
  top: 200px;
  right: 30px;
  display: flex;
  align-items: center;
  width: 118px;
  height: 26px;
  padding-left: 20px;
  border: 1px solid #a9c6de;
  background: #fff;
  color: #0a70d8;
  font-size: 15px;
  font-weight: 700;
}
.ime-float .plain { width: 24px; height: 24px; }
.ime-logo { position: absolute; top: -5px; left: -14px; }
```
